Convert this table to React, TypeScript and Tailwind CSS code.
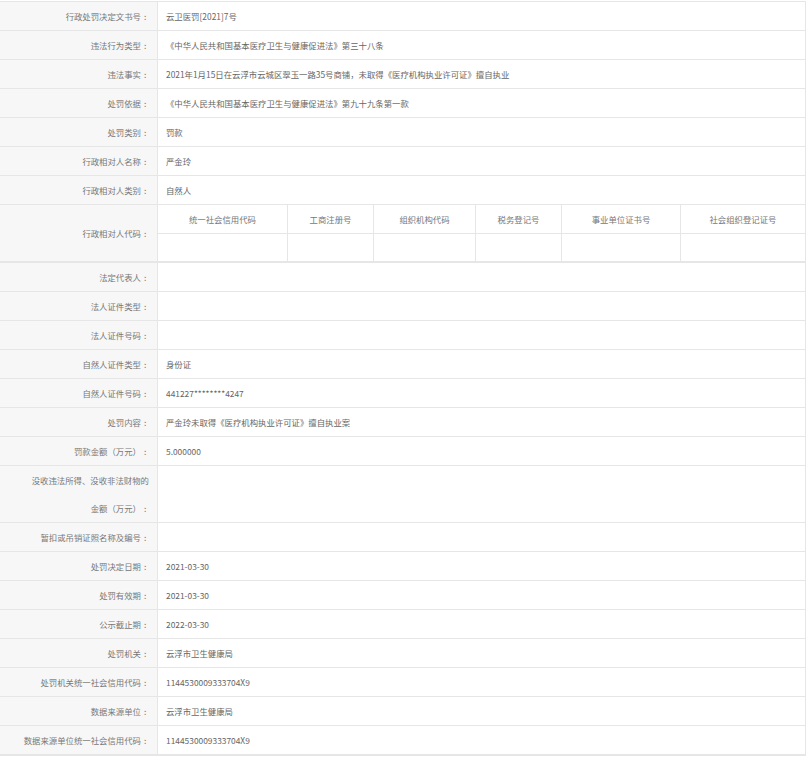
import type { ReactNode } from 'react';

type Row = {
  label: ReactNode;
  value?: ReactNode;
};

const rowsTop: Row[] = [
  { label: '行政处罚决定文书号', value: '云卫医罚[2021]7号' },
  { label: '违法行为类型', value: '《中华人民共和国基本医疗卫生与健康促进法》第三十八条' },
  {
    label: '违法事实',
    value: '2021年1月15日在云浮市云城区翠玉一路35号商铺，未取得《医疗机构执业许可证》擅自执业',
  },
  { label: '处罚依据', value: '《中华人民共和国基本医疗卫生与健康促进法》第九十九条第一款' },
  { label: '处罚类别', value: '罚款' },
  { label: '行政相对人名称', value: '严金玲' },
  { label: '行政相对人类别', value: '自然人' },
];

const rowsBottom: Row[] = [
  { label: '法定代表人' },
  { label: '法人证件类型' },
  { label: '法人证件号码' },
  { label: '自然人证件类型', value: '身份证' },
  { label: '自然人证件号码', value: '441227********4247' },
  { label: '处罚内容', value: '严金玲未取得《医疗机构执业许可证》擅自执业案' },
  { label: '罚款金额（万元）', value: '5.000000' },
  {
    label: (
      <>
        没收违法所得、没收非法财物的
        <br />
        金额（万元）
      </>
    ),
  },
  { label: '暂扣或吊销证照名称及编号' },
  { label: '处罚决定日期', value: '2021-03-30' },
  { label: '处罚有效期', value: '2021-03-30' },
  { label: '公示截止期', value: '2022-03-30' },
  { label: '处罚机关', value: '云浮市卫生健康局' },
  { label: '处罚机关统一社会信用代码', value: '1144530009333704X9' },
  { label: '数据来源单位', value: '云浮市卫生健康局' },
  { label: '数据来源单位统一社会信用代码', value: '1144530009333704X9' },
  { label: null },
];

const codeColumns = ['统一社会信用代码', '工商注册号', '组织机构代码', '税务登记号', '事业单位证书号', '社会组织登记证号'];

function Colon() {
  return <span className="ml-[3px] inline-block w-[5px] text-left">:</span>;
}

function InfoRow({ label, value }: Row) {
  return (
    <div className="grid grid-cols-[158px_1fr] border-b border-[#e6e6e6]">
      <div className="border-r border-[#e6e6e6] bg-[#f7f7f7] pr-[8px] text-right leading-[28px] text-[#777]">
        {label}
        {label !== null && <Colon />}
      </div>
      <div className="pl-2 leading-[28px] text-[#666]">{value}</div>
    </div>
  );
}

export default function App() {
  return (
    <div
      className="w-[807px] bg-white pt-px text-[8.4px]"
      style={{ fontFamily: '"Noto Sans CJK SC", "Noto Sans", sans-serif' }}
    >
      <div className="w-[806px] border-r border-t border-[#e6e6e6]">
        {rowsTop.map((row, i) => (
          <InfoRow key={i} {...row} />
        ))}

        <div className="grid grid-cols-[158px_1fr] border-b-2 border-[#e6e6e6]">
          <div className="flex items-center justify-end border-r border-[#e6e6e6] bg-[#f7f7f7] pr-[8px] text-[#777]">
            行政相对人代码
            <Colon />
          </div>
          <div className="grid grid-cols-[130px_86px_102px_86px_119px_1fr] text-[#777]">
            {codeColumns.map((col, i) => (
              <div
                key={col}
                className={`border-b border-[#e6e6e6] text-center leading-[28px] ${i < 5 ? 'border-r' : ''}`}
              >
                {col}
              </div>
            ))}
            {codeColumns.map((col, i) => (
              <div key={col + '-v'} className={`h-[27px] border-[#e6e6e6] ${i < 5 ? 'border-r' : ''}`} />
            ))}
          </div>
        </div>

        {rowsBottom.map((row, i) => (
          <InfoRow key={i} {...row} />
        ))}
      </div>
    </div>
  );
}
